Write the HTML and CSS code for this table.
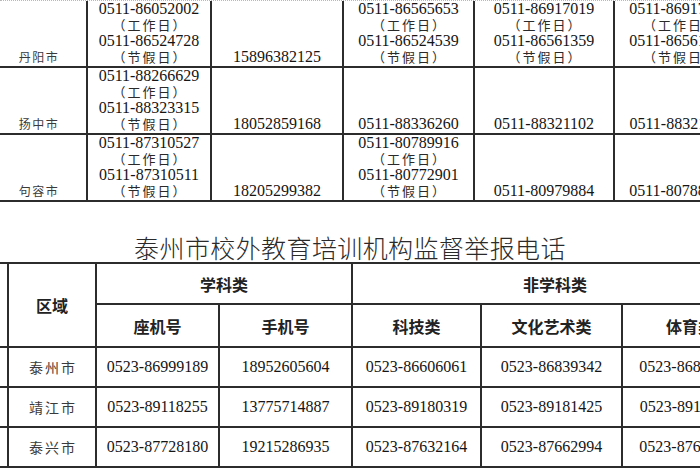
FILE: index.html
```html
<!DOCTYPE html>
<html lang="zh-CN">
<head>
<meta charset="utf-8">
<title>校外教育培训机构监督举报电话</title>
<link rel="stylesheet" href="styles.css">
</head>
<body>
<div class="page">
  <table class="t1">
    <colgroup>
      <col class="w96"><col class="w124"><col class="w132"><col class="w131"><col class="w140"><col class="w131">
    </colgroup>
    <tr>
      <td class="city">丹阳市</td>
      <td><div>0511-86052002</div><div class="note">（工作日）</div><div>0511-86524728</div><div class="note">（节假日）</div></td>
      <td>15896382125</td>
      <td><div>0511-86565653</div><div class="note">（工作日）</div><div>0511-86524539</div><div class="note">（节假日）</div></td>
      <td><div>0511-86917019</div><div class="note">（工作日）</div><div>0511-86561359</div><div class="note">（节假日）</div></td>
      <td><div>0511-86917019</div><div class="note">（工作日）</div><div>0511-86561359</div><div class="note">（节假日）</div></td>
    </tr>
    <tr>
      <td class="city">扬中市</td>
      <td><div>0511-88266629</div><div class="note">（工作日）</div><div>0511-88323315</div><div class="note">（节假日）</div></td>
      <td>18052859168</td>
      <td>0511-88336260</td>
      <td>0511-88321102</td>
      <td>0511-88321102</td>
    </tr>
    <tr>
      <td class="city">句容市</td>
      <td><div>0511-87310527</div><div class="note">（工作日）</div><div>0511-87310511</div><div class="note">（节假日）</div></td>
      <td>18205299382</td>
      <td><div>0511-80789916</div><div class="note">（工作日）</div><div>0511-80772901</div><div class="note">（节假日）</div></td>
      <td>0511-80979884</td>
      <td>0511-80788916</td>
    </tr>
  </table>

  <h1 class="title">泰州市校外教育培训机构监督举报电话</h1>

  <table class="t2">
    <colgroup>
      <col class="w27"><col class="w88"><col class="w123"><col class="w133"><col class="w129"><col class="w141"><col class="w136">
    </colgroup>
    <tr class="h1">
      <th rowspan="2"></th>
      <th rowspan="2">区域</th>
      <th colspan="2">学科类</th>
      <th colspan="3">非学科类</th>
    </tr>
    <tr class="h2">
      <th>座机号</th>
      <th>手机号</th>
      <th>科技类</th>
      <th>文化艺术类</th>
      <th>体育类</th>
    </tr>
    <tr>
      <td></td>
      <td class="city">泰州市</td>
      <td>0523-86999189</td>
      <td>18952605604</td>
      <td>0523-86606061</td>
      <td>0523-86839342</td>
      <td>0523-86839355</td>
    </tr>
    <tr>
      <td></td>
      <td class="city">靖江市</td>
      <td>0523-89118255</td>
      <td>13775714887</td>
      <td>0523-89180319</td>
      <td>0523-89181425</td>
      <td>0523-89118762</td>
    </tr>
    <tr>
      <td></td>
      <td class="city">泰兴市</td>
      <td>0523-87728180</td>
      <td>19215286935</td>
      <td>0523-87632164</td>
      <td>0523-87662994</td>
      <td>0523-87662981</td>
    </tr>
  </table>
</div>
</body>
</html>
```

FILE: styles.css
```css
html, body {
  margin: 0;
  padding: 0;
  background: #ffffff;
}

.page {
  width: 700px;
  height: 470px;
  overflow: hidden;
  box-sizing: border-box;
  border-top: 1px dotted #b8b8b8;
  background: #ffffff;
}

table {
  border-collapse: collapse;
  table-layout: fixed;
}

.w96 { width: 96px; }
.w124 { width: 124px; }
.w132 { width: 132px; }
.w131 { width: 131px; }
.w140 { width: 140px; }
.w27 { width: 27px; }
.w88 { width: 88px; }
.w123 { width: 123px; }
.w133 { width: 133px; }
.w129 { width: 129px; }
.w141 { width: 141px; }
.w136 { width: 136px; }

/* upper table */
.t1 {
  width: 754px;
  margin-left: -10px;
}

.t1 td {
  border: 2px solid #2c2c2c;
  height: 63px;
  padding: 0 0 1px 0;
  vertical-align: bottom;
  text-align: center;
  font-family: "Liberation Serif", "Times New Roman", serif;
  font-size: 16px;
  line-height: 16px;
  color: #151515;
  white-space: nowrap;
  overflow: hidden;
}

.t1 tr:first-child td {
  border-top: none;
}

.t1 .note {
  height: 16px;
  font-family: "Noto Sans CJK SC", sans-serif;
  font-weight: 400;
  font-size: 13px;
  line-height: 16px;
  letter-spacing: 2px;
  padding-left: 2px;
  color: #2a2a2a;
}

.t1 td.city {
  font-family: "Noto Sans CJK SC", sans-serif;
  font-weight: 400;
  font-size: 12px;
  letter-spacing: 1.5px;
  color: #3a3a3a;
}

/* title */
.title {
  margin: 30px 0 0 0;
  font-family: "Noto Sans CJK SC", sans-serif;
  font-weight: 300;
  font-size: 25px;
  line-height: 30px;
  text-align: center;
  color: #2a2a2a;
  letter-spacing: 0.4px;
}

/* lower table */
.t2 {
  width: 777px;
  margin-left: -20px;
}

.t2 th,
.t2 td {
  border: 2px solid #2c2c2c;
  padding: 0;
  text-align: center;
  vertical-align: middle;
  white-space: nowrap;
  overflow: hidden;
}

.t2 th {
  font-family: "Noto Sans CJK SC", sans-serif;
  font-weight: 700;
  font-size: 16px;
  color: #222;
}

.t2 .h1 th { height: 39px; }
.t2 .h2 th { height: 41px; }

.t2 td {
  height: 38px;
  font-family: "Liberation Serif", "Times New Roman", serif;
  font-size: 16px;
  color: #151515;
}

.t2 td.city {
  font-family: "Noto Sans CJK SC", sans-serif;
  font-weight: 400;
  font-size: 14px;
  letter-spacing: 2px;
  padding-left: 2px;
  color: #3a3a3a;
}
```
